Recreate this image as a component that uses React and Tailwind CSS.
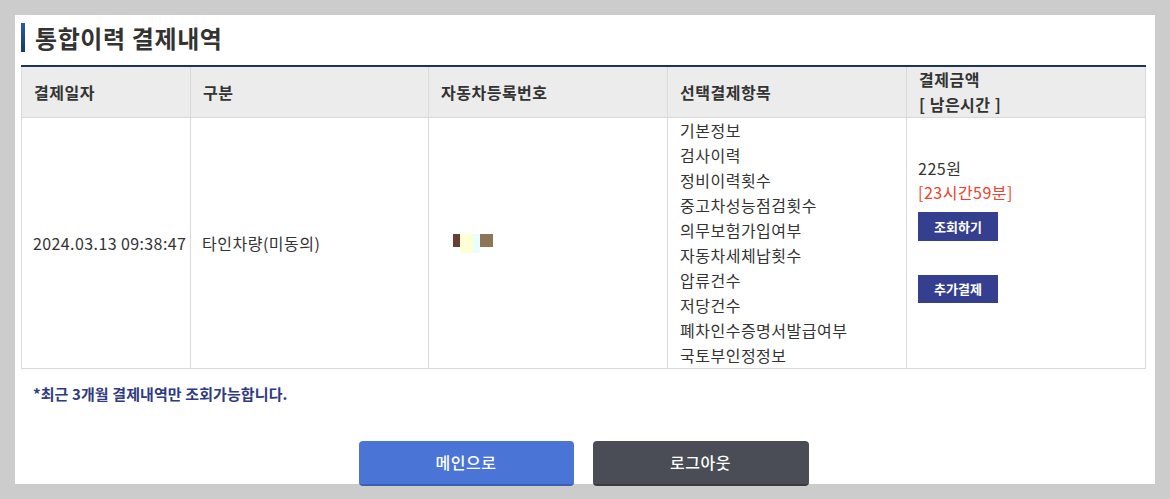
const items = [
  "기본정보",
  "검사이력",
  "정비이력횟수",
  "중고차성능점검횟수",
  "의무보험가입여부",
  "자동차세체납횟수",
  "압류건수",
  "저당건수",
  "폐차인수증명서발급여부",
  "국토부인정정보",
];

function App() {
  return (
    <div
      className="w-[1170px] h-[499px] bg-[#cccccc] pt-[15px] pl-[15px] overflow-hidden"
      style={{ fontFamily: '"Noto Sans CJK KR", "Noto Sans", sans-serif' }}
    >
      <div className="w-[1140px] h-[469px] bg-white pl-[6px] pr-[10px] pt-[8px] relative">
        <div className="flex items-center h-[29px]">
          <div className="w-[4px] h-[29px] bg-gradient-to-b from-[#2a5da0] to-[#173a6b]" />
          <h2 className="ml-[10px] text-[24px] font-bold text-[#333] leading-none tracking-[0.6px]">통합이력 결제내역</h2>
        </div>

        <table className="mt-[13px] w-[1124px] border-collapse table-fixed text-[16px] text-[#333] tracking-[0.5px]">
          <colgroup>
            <col className="w-[169px]" />
            <col className="w-[238px]" />
            <col className="w-[239px]" />
            <col className="w-[239px]" />
            <col className="w-[239px]" />
          </colgroup>
          <thead>
            <tr className="bg-[#ececec] h-[50px] border-t-2 border-[#1d3461]">
              <th className="border border-t-0 border-[#d9d9d9] text-left font-bold pl-[12px] align-middle">결제일자</th>
              <th className="border border-t-0 border-[#d9d9d9] text-left font-bold pl-[12px]">구분</th>
              <th className="border border-t-0 border-[#d9d9d9] text-left font-bold pl-[12px]">자동차등록번호</th>
              <th className="border border-t-0 border-[#d9d9d9] text-left font-bold pl-[12px]">선택결제항목</th>
              <th className="border border-t-0 border-[#d9d9d9] text-left font-bold pl-[12px] leading-[25px]">
                결제금액
                <br />[ 남은시간 ]
              </th>
            </tr>
          </thead>
          <tbody>
            <tr>
              <td className="border border-[#d9d9d9] pl-[11px] whitespace-nowrap tracking-[0.4px]">2024.03.13 09:38:47</td>
              <td className="border border-[#d9d9d9] pl-[11px]">타인차량(미동의)</td>
              <td className="border border-[#d9d9d9] pl-[24px]">
                <div className="flex items-start h-[19px]">
                  <div className="w-[7px] h-[13px] bg-[#673f35]" />
                  <div className="w-[13px] h-[19px] bg-[#ffffd5]" />
                  <div className="w-[7px] h-[19px] bg-[#e9ffff]" />
                  <div className="w-[13px] h-[13px] bg-[#8d7658]" />
                </div>
              </td>
              <td className="border border-[#d9d9d9] pl-[12px] leading-[25px] py-0">
                {items.map((it) => (
                  <div key={it}>{it}</div>
                ))}
              </td>
              <td className="border border-[#d9d9d9] pl-[11px] align-top pt-[38px]">
                <div className="leading-[24px]">225원</div>
                <div className="leading-[24px] text-[#f0412a]">[23시간59분]</div>
                <button className="mt-[8px] w-[80px] h-[29px] bg-[#353f8f] text-white text-[13px] font-bold tracking-normal">조회하기</button>
                <div className="h-[34px]" />
                <button className="w-[80px] h-[28px] bg-[#353f8f] text-white text-[13px] font-bold tracking-normal">추가결제</button>
              </td>
            </tr>
          </tbody>
        </table>

        <p className="mt-[14px] ml-[12px] text-[15px] font-bold text-[#2e3a82] tracking-[0.1px]">*최근 3개월 결제내역만 조회가능합니다.</p>

        <div className="mt-[35px] flex justify-center gap-[19px] pl-[1px]">
          <button className="w-[215px] h-[45px] rounded-[4px] bg-[#4a74d6] border-b-2 border-[#3b5fb5] text-white text-[16px] font-medium tracking-[0.5px]">메인으로</button>
          <button className="w-[216px] h-[45px] rounded-[4px] bg-[#4a4d55] border-b-2 border-[#3a3c42] text-white text-[16px] font-medium tracking-[0.5px]">로그아웃</button>
        </div>
      </div>
    </div>
  );
}

export default App;
